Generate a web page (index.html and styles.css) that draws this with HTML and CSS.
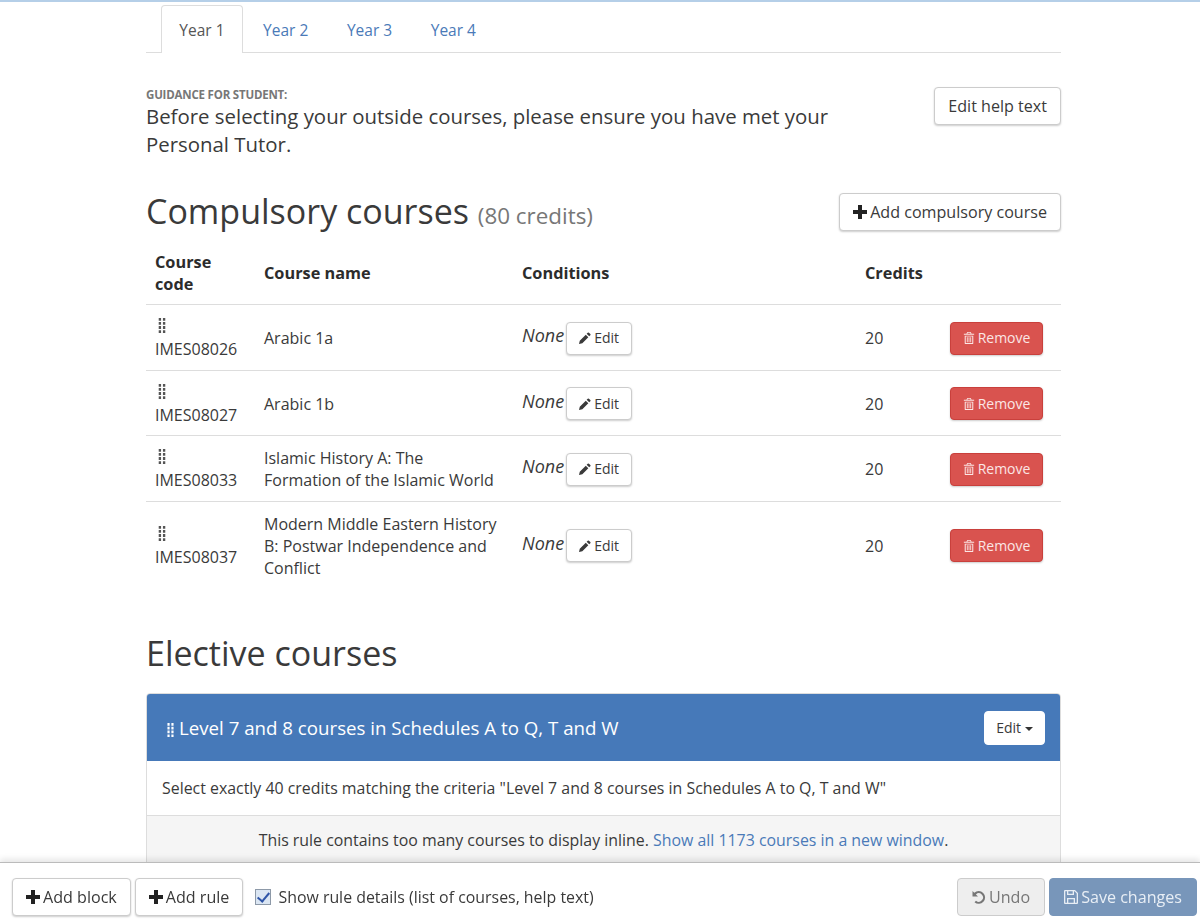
FILE: index.html
```html
<!DOCTYPE html>
<html lang="en">
<head>
<meta charset="utf-8">
<title>Programme builder</title>
<link rel="stylesheet" href="styles.css">
</head>
<body>
<svg class="sprite" aria-hidden="true">
  <symbol id="i-plus" viewBox="0 0 14 14"><path d="M5 0h4v5h5v4H9v5H5V9H0V5h5z"/></symbol>
  <symbol id="i-pencil" viewBox="0 0 14 14"><path d="M10.2.8a1 1 0 0 1 1.4 0l1.6 1.6a1 1 0 0 1 0 1.4l-1.300 1.300-3-3zM7.900 3.100l3 3-7 7-3.900 .9.9-3.900z"/></symbol>
  <symbol id="i-trash" viewBox="0 0 14 14"><path d="M5 0h4l1 2h3v1.300H1V2h3zM5.500 1 5.200 2h3.600L8.500 1zM2 4.300h10V13a1 1 0 0 1-1 1H3a1 1 0 0 1-1-1zM3.200 5.300V12.800h7.600V5.300zM4.500 6h1v6h-1zM6.500 6h1v6h-1zM8.500 6h1v6h-1z" fill-rule="evenodd"/></symbol>
  <symbol id="i-save" viewBox="0 0 14 14"><path d="M0 1a1 1 0 0 1 1-1h10l3 3v10a1 1 0 0 1-1 1H1a1 1 0 0 1-1-1zM1.300 1.300v11.400h1.700V8h8v4.700h1.700V3.500L10.500 1.300H10V5H3V1.300zM4.300 1.300v2.400h4.400V1.300zM4.300 9.200v3.500h5.400V9.200z" fill-rule="evenodd"/></symbol>
  <symbol id="i-undo" viewBox="0 0 14 14"><path d="M.5 1v5.500H6L3.900 4.400A4.200 4.200 0 1 1 4 10.700l-1.500 1.600A6.400 6.400 0 1 0 2.300 2.800z"/></symbol>
  <symbol id="i-grip" viewBox="0 0 8 16"><path d="M.5 0h2.500v3H.5zM5 0h2.500v3H5zM.5 4.300h2.500v3H.5zM5 4.300h2.500v3H5zM.5 8.600h2.500v3H.5zM5 8.600h2.500v3H5zM.5 13h2.500v3H.5zM5 13h2.500v3H5z"/></symbol>
</svg>

<div class="page">
  <ul class="tabs">
    <li class="tab tab-active">Year 1</li>
    <li class="tab"><a href="#">Year 2</a></li>
    <li class="tab"><a href="#">Year 3</a></li>
    <li class="tab"><a href="#">Year 4</a></li>
  </ul>

  <section class="guidance">
    <div class="guidance-text">
      <div class="guidance-label">GUIDANCE FOR STUDENT:</div>
      <p class="guidance-body">Before selecting your outside courses, please ensure you have met your Personal Tutor.</p>
    </div>
    <button class="btn">Edit help text</button>
  </section>

  <section class="section-head">
    <h2 class="heading">Compulsory courses <small class="heading-note">(80 credits)</small></h2>
    <button class="btn"><svg class="icon icon-plus"><use href="#i-plus"/></svg>Add compulsory course</button>
  </section>

  <table class="courses">
    <colgroup>
      <col class="col-code"><col class="col-name"><col class="col-cond"><col class="col-credits"><col class="col-action">
    </colgroup>
    <thead>
      <tr><th>Course code</th><th>Course name</th><th>Conditions</th><th>Credits</th><th></th></tr>
    </thead>
    <tbody>
      <tr>
        <td><svg class="grip"><use href="#i-grip"/></svg><br>IMES08026</td>
        <td>Arabic 1a</td>
        <td><em class="none">None</em><button class="btn btn-sm"><svg class="icon icon-sm"><use href="#i-pencil"/></svg>Edit</button></td>
        <td>20</td>
        <td><button class="btn btn-sm btn-danger"><svg class="icon icon-sm"><use href="#i-trash"/></svg>Remove</button></td>
      </tr>
      <tr>
        <td><svg class="grip"><use href="#i-grip"/></svg><br>IMES08027</td>
        <td>Arabic 1b</td>
        <td><em class="none">None</em><button class="btn btn-sm"><svg class="icon icon-sm"><use href="#i-pencil"/></svg>Edit</button></td>
        <td>20</td>
        <td><button class="btn btn-sm btn-danger"><svg class="icon icon-sm"><use href="#i-trash"/></svg>Remove</button></td>
      </tr>
      <tr>
        <td><svg class="grip"><use href="#i-grip"/></svg><br>IMES08033</td>
        <td>Islamic History A: The Formation of the Islamic World</td>
        <td><em class="none">None</em><button class="btn btn-sm"><svg class="icon icon-sm"><use href="#i-pencil"/></svg>Edit</button></td>
        <td>20</td>
        <td><button class="btn btn-sm btn-danger"><svg class="icon icon-sm"><use href="#i-trash"/></svg>Remove</button></td>
      </tr>
      <tr>
        <td><svg class="grip"><use href="#i-grip"/></svg><br>IMES08037</td>
        <td>Modern Middle Eastern History B: Postwar Independence and Conflict</td>
        <td><em class="none">None</em><button class="btn btn-sm"><svg class="icon icon-sm"><use href="#i-pencil"/></svg>Edit</button></td>
        <td>20</td>
        <td><button class="btn btn-sm btn-danger"><svg class="icon icon-sm"><use href="#i-trash"/></svg>Remove</button></td>
      </tr>
    </tbody>
  </table>

  <h2 class="heading heading-elective">Elective courses</h2>

  <section class="panel">
    <header class="panel-head">
      <h3 class="panel-title"><svg class="grip grip-light"><use href="#i-grip"/></svg>Level 7 and 8 courses in Schedules A to Q, T and W</h3>
      <button class="btn btn-sm btn-plain">Edit<span class="caret"></span></button>
    </header>
    <div class="panel-body">Select exactly 40 credits matching the criteria "Level 7 and 8 courses in Schedules A to Q, T and W"</div>
    <div class="panel-foot">This rule contains too many courses to display inline. <a href="#">Show all 1173 courses in a new window</a>.</div>
  </section>
</div>

<footer class="toolbar">
  <div class="toolbar-left">
    <button class="btn"><svg class="icon icon-plus"><use href="#i-plus"/></svg>Add block</button>
    <button class="btn"><svg class="icon icon-plus"><use href="#i-plus"/></svg>Add rule</button>
    <label class="check"><input type="checkbox" checked>Show rule details (list of courses, help text)</label>
  </div>
  <div class="toolbar-right">
    <button class="btn btn-disabled"><svg class="icon"><use href="#i-undo"/></svg>Undo</button>
    <button class="btn btn-save"><svg class="icon"><use href="#i-save"/></svg>Save changes</button>
  </div>
</footer>
</body>
</html>
```

FILE: styles.css
```css
* { box-sizing: border-box; }

html, body {
  height: 922px;
  margin: 0;
  overflow: hidden;
}

body {
  background: #fff;
  border-top: 2px solid #b5cfe8;
  color: #3a3a3a;
  font-family: "Open Sans", sans-serif;
  font-size: 16px;
  line-height: 22px;
}

a { color: #4a7ab8; text-decoration: none; }

.sprite { display: none; }

.page {
  margin-left: 146px;
  width: 915px;
}

.tabs {
  border-bottom: 1px solid #ddd;
  display: flex;
  font-size: 15.500px;
  height: 51px;
  list-style: none;
  margin: 0;
  padding: 3px 0 0 15px;
}

.tab {
  border: 1px solid transparent;
  border-bottom: 0;
  height: 47px;
  margin-right: 2px;
  padding: 12.500px 17.300px 0;
}

.tab-active {
  background: #fff;
  border-color: #ddd;
  border-radius: 4px 4px 0 0;
  color: #555;
  height: 48px;
  margin-bottom: -1px;
}

.guidance {
  align-items: flex-start;
  display: flex;
  justify-content: space-between;
  padding-top: 34px;
}

.guidance-text { width: 720px; }

.guidance-label {
  color: #777;
  font-size: 11.500px;
  font-weight: 700;
  letter-spacing: -.2px;
  line-height: 15px;
}

.guidance-body {
  font-size: 20.400px;
  line-height: 28px;
  margin: 0 0 1px;
}

.btn {
  background: #fff;
  border: 1px solid #ccc;
  border-radius: 4px;
  box-shadow: 0 1px 2px rgba(0, 0, 0, .2);
  color: #3a3a3a;
  font-family: inherit;
  font-size: 16.100px;
  height: 38px;
  line-height: 22px;
  padding: 0 13px;
  white-space: nowrap;
}

.btn-sm {
  font-size: 14px;
  height: 33px;
  padding: 0 12px;
}

.btn-danger {
  background: #d9534f;
  border-color: #c9403c;
  color: #fbe6e5;
  padding: 0;
  width: 93px;
}

.btn-plain {
  border-color: #fff;
  box-shadow: none;
  height: 34px;
  padding: 0 11px;
}

.btn-disabled {
  background: #eee;
  box-shadow: none;
  color: #777;
  padding: 0 14px;
}

.btn-save {
  background: #7896ba;
  border-color: #7896ba;
  box-shadow: none;
  color: #e8eef5;
  padding: 0 14px;
}

.icon {
  fill: currentColor;
  height: 14px;
  margin-right: 3px;
  vertical-align: -1px;
  width: 14px;
}

.icon-plus { fill: #222; }

.icon-sm {
  height: 12px;
  margin-right: 3px;
  vertical-align: -1px;
  width: 12px;
}

.section-head {
  align-items: flex-start;
  display: flex;
  justify-content: space-between;
  padding-top: 34px;
}

.heading {
  font-size: 34px;
  font-weight: 400;
  line-height: 36px;
  margin: 0;
}

.heading-note {
  color: #777;
  font-size: 22.400px;
}

.heading-elective {
  margin-top: 47px;
}

.courses {
  border-collapse: collapse;
  margin-top: 8px;
  table-layout: fixed;
  width: 915px;
}

.col-code { width: 109px; }
.col-name { width: 258px; }
.col-cond { width: 343px; }
.col-credits { width: 85px; }
.col-action { width: 120px; }

.courses th {
  border-bottom: 1px solid #ddd;
  color: #2c2c2c;
  font-size: 16.300px;
  font-weight: 700;
  padding: 9px;
  text-align: left;
  vertical-align: middle;
}

.courses td {
  padding: 11px 9px 9.600px;
  vertical-align: middle;
}

.courses tbody tr + tr td { border-top: 1px solid #ddd; }

.grip {
  fill: #555;
  height: 15px;
  margin-left: 3px;
  width: 8px;
}

.grip-light {
  fill: #fff;
  height: 14px;
  margin: 0 5px 0 0;
  vertical-align: -2px;
  width: 7px;
}

.none {
  font-size: 18px;
  margin-right: 2px;
  position: relative;
  top: -1px;
}

.panel {
  border: 1px solid #ddd;
  border-radius: 4px;
  margin-top: 22px;
  overflow: hidden;
}

.panel-head {
  align-items: center;
  background: #4679b9;
  color: #fff;
  display: flex;
  height: 67px;
  justify-content: space-between;
  padding: 0 15px 0 20px;
}

.panel-title {
  font-size: 18.700px;
  font-weight: 400;
  margin: 0;
}

.caret {
  border-left: 4px solid transparent;
  border-right: 4px solid transparent;
  border-top: 4px solid #333;
  display: inline-block;
  margin-left: 4px;
  vertical-align: 2px;
}

.panel-body {
  border-bottom: 1px solid #ddd;
  font-size: 15.900px;
  height: 55px;
  padding: 16px 15px;
}

.panel-foot {
  background: #f5f5f5;
  font-size: 15.900px;
  height: 60px;
  padding: 13px 15px;
  text-align: center;
}

.toolbar {
  align-items: center;
  background: #fff;
  border-top: 1px solid #bbb;
  bottom: 0;
  box-shadow: 0 -3px 6px rgba(0, 0, 0, .1);
  display: flex;
  height: 60px;
  justify-content: space-between;
  left: 0;
  padding: 8px 3px 0 12px;
  position: fixed;
  right: 0;
}

.toolbar-left, .toolbar-right {
  align-items: center;
  display: flex;
  gap: 4px;
}

.check {
  align-items: center;
  display: flex;
  font-size: 15.900px;
  margin-left: 8px;
}

.check input {
  appearance: none;
  background: #dbe6f3;
  border: 1px solid #8d99a8;
  height: 16px;
  margin: 0 7px 0 0;
  position: relative;
  width: 16px;
}

.check input::after {
  border: solid #2f55a8;
  border-width: 0 2px 2px 0;
  content: "";
  height: 10px;
  left: 4px;
  position: absolute;
  top: 0;
  transform: rotate(40deg);
  width: 5px;
}
```
